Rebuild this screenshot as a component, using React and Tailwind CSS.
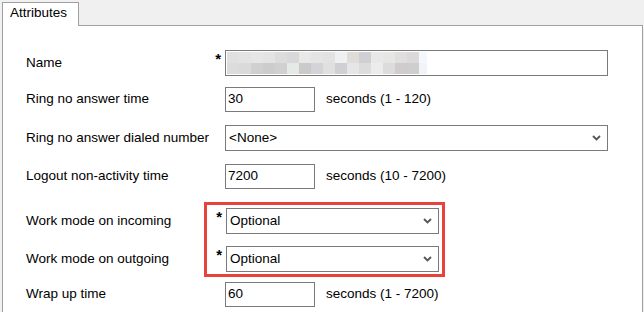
import React from "react";

const topBlocks = [
  "#e0e0e0", "#e3e3e3", "#e6e6e6", "#e4e4e4", "#dcdcdc", "#d8d8da", "#e8e8e6", "#e4e4e4",
  "#e2e2e2", "#eef0f2", "#e0ddd8", "#d0d0d4", "#e8e8e8", "#e6e6e4", "#e0dede", "#dadada",
];
const bottomBlocks = [
  "#dcdcdc", "#dadada", "#d0d0d0", "#cccccc", "#d0d0d0", "#e6eae6", "#cacaca", "#d4d4d8",
  "#e0e0e0", "#d0d0d4", "#e6e6e8", "#dcdcdc", "#ececec", "#dcdcdc", "#d0cccc", "#cecece",
];

const Chevron = () => (
  <svg width="9" height="6" viewBox="0 0 9 6" className="shrink-0">
    <path d="M1 1 L4.5 4.5 L8 1" fill="none" stroke="#555" strokeWidth="1.8" />
  </svg>
);

const Star = ({ show = true }) => (
  <div className="w-[19px] shrink-0 self-start flex justify-end pr-[4px] pt-[1px]">
    {show && <span className="text-[15px] font-bold leading-none">*</span>}
  </div>
);

const TextBox = ({ value }) => (
  <div className="w-[90px] h-[25px] border border-[#7a7a7a] bg-white flex items-center pl-[2px]">
    {value}
  </div>
);

const SelectBox = ({ value, width }) => (
  <div className={`${width} h-[26px] border border-[#7a7a7a] bg-white flex items-center justify-between pl-[3px] pr-[6px]`}>
    <span>{value}</span>
    <Chevron />
  </div>
);

const Label = ({ children }) => (
  <div className="w-[203px] shrink-0 pl-[23px] self-center whitespace-nowrap">{children}</div>
);

export default function App() {
  return (
    <div
      className="w-[644px] h-[312px] bg-[#f0f0f0] overflow-hidden text-[13.5px] text-black"
      style={{ fontFamily: '"Liberation Sans", Arial, sans-serif' }}
    >
      <div className="h-[25px] flex items-end pl-[2px]">
        <div className="w-[77px] h-[24px] bg-white border border-b-0 border-[#a0a0a0] pl-[7px] pt-[1px] relative z-10 -mb-px leading-[18px]">
          Attributes
        </div>
      </div>
      <div className="ml-[2px] w-[641px] h-[300px] bg-white border border-[#a0a0a0] flex flex-col">
        <div className="mt-[24px] h-[26px] flex">
          <Label>Name</Label>
          <Star />
          <div className="w-[383px] h-[26px] border border-[#7a7a7a] bg-white flex flex-col pl-[1px] py-[1px]">
            <div className="flex h-[12px]">
              {topBlocks.map((c, i) => (
                <div key={i} className="w-[12px] h-full" style={{ background: c }} />
              ))}
              <div className="w-[8px] h-full bg-[#f4f8fc]" />
            </div>
            <div className="flex h-[12px]">
              {bottomBlocks.map((c, i) => (
                <div key={i} className="w-[12px] h-full" style={{ background: c }} />
              ))}
              <div className="w-[8px] h-full bg-[#f0f4f8]" />
            </div>
          </div>
        </div>

        <div className="mt-[11px] h-[25px] flex items-center">
          <Label>Ring no answer time</Label>
          <Star show={false} />
          <TextBox value="30" />
          <span className="ml-[11px]">seconds (1 - 120)</span>
        </div>

        <div className="mt-[13px] h-[26px] flex items-center">
          <Label>Ring no answer dialed number</Label>
          <Star show={false} />
          <SelectBox value="<None>" width="w-[383px]" />
        </div>

        <div className="mt-[13px] h-[25px] flex items-center">
          <Label>Logout non-activity time</Label>
          <Star show={false} />
          <TextBox value="7200" />
          <span className="ml-[11px]">seconds (10 - 7200)</span>
        </div>

        <div className="mt-[13px] flex">
          <div className="w-[201px] shrink-0 flex flex-col pl-[23px] whitespace-nowrap">
            <div className="h-[26px] mt-[6px] flex items-center">Work mode on incoming</div>
            <div className="h-[26px] mt-[12px] flex items-center">Work mode on outgoing</div>
          </div>
          <div className="w-[241px] h-[75px] border-[3px] border-[#e8413e] flex flex-col pt-[3px]">
            <div className="h-[26px] flex">
              <Star />
              <SelectBox value="Optional" width="w-[213px]" />
            </div>
            <div className="h-[26px] mt-[12px] flex">
              <Star />
              <SelectBox value="Optional" width="w-[213px]" />
            </div>
          </div>
        </div>

        <div className="mt-[5px] h-[25px] flex items-center">
          <Label>Wrap up time</Label>
          <Star show={false} />
          <TextBox value="60" />
          <span className="ml-[11px]">seconds (1 - 7200)</span>
        </div>
      </div>
    </div>
  );
}
